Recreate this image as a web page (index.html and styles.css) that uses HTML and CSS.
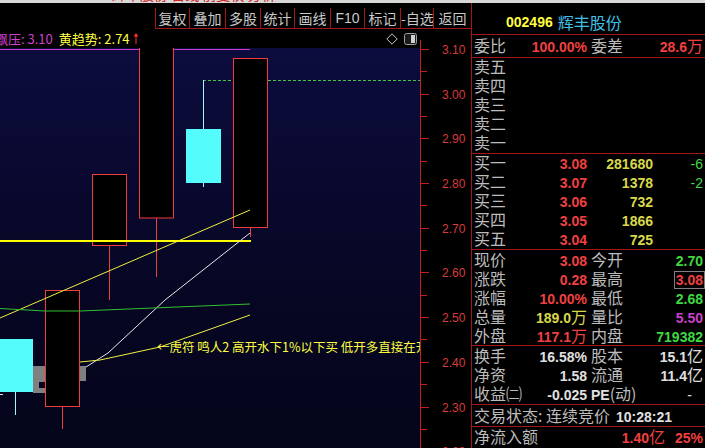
FILE: index.html
```html
<!DOCTYPE html>
<html lang="zh-CN">
<head>
<meta charset="utf-8">
<title>002496 辉丰股份</title>
<link rel="stylesheet" href="styles.css">
</head>
<body>
<div class="screen">
  <div class="strip"><span class="strip-text">辉丰股份 日线 前复权 分析</span></div>
  <div class="main">
    <div class="left">
      <div class="toolbar">
        <div class="btn w34">复权</div>
        <div class="btn w36">叠加</div>
        <div class="btn w35">多股</div>
        <div class="btn w34">统计</div>
        <div class="btn w36">画线</div>
        <div class="btn w34 lat">F10</div>
        <div class="btn w36">标记</div>
        <div class="btn w33">-自选</div>
        <div class="btn w38">返回</div>
      </div>
      <div class="info">
        <div class="info-left">
          <span class="mag first">飘压: 3.10</span>
          <span class="ylw">黄趋势: 2.74</span>
          <svg class="up-arrow" width="6" height="13" viewBox="0 0 6 13"><path d="M3 1 L0.5 4.5 H2.5 V12 H3.5 V4.5 H5.5 Z" fill="#ff3030"/></svg>
          <span class="spacer"></span>
          <svg class="ico" width="12" height="12" viewBox="0 0 12 12"><path d="M6 0.8 L11.2 6 L6 11.2 L0.8 6 Z" fill="none" stroke="#c8c8c8"/></svg>
          <svg class="ico" width="13" height="12" viewBox="0 0 13 12"><rect x="0.5" y="0.5" width="12" height="11" rx="2" fill="#1a1a1a" stroke="#a0a0a0"/><rect x="7" y="2" width="4" height="8" fill="#d0d0d0"/></svg>
        </div>
        <div class="info-axis"></div>
      </div>
      <div class="plot-row">
        <svg class="plot" width="420" height="400" viewBox="0 48 420 400">
          <line x1="0" y1="49.5" x2="250" y2="49.5" stroke="#c83cc8"/>
          <line x1="203" y1="80.5" x2="420" y2="80.5" stroke="#3cc83c" stroke-dasharray="3 2"/>
          <path d="M33 366 H45 V382 H39 V388 H45 V393 H33 Z" fill="#808080"/>
          <rect x="79" y="366" width="7" height="15" fill="#808080"/>
          <g stroke="#f03c3c" fill="#000">
            <line x1="156.5" y1="218" x2="156.5" y2="277"/>
            <rect x="139.5" y="40" width="34" height="178"/>
            <line x1="250.5" y1="228" x2="250.5" y2="237"/>
            <rect x="233.5" y="58.5" width="34" height="169"/>
            <line x1="109.5" y1="245" x2="109.5" y2="300"/>
            <rect x="92.5" y="174.5" width="34" height="71"/>
            <line x1="62.5" y1="406" x2="62.5" y2="429"/>
            <rect x="45.5" y="290.5" width="34" height="116"/>
          </g>
          <line x1="203.5" y1="80" x2="203.5" y2="187" stroke="#a0f8f8"/>
          <rect x="186" y="129" width="35" height="54" fill="#54fcfc"/>
          <line x1="15.5" y1="392" x2="15.5" y2="415" stroke="#a0f8f8"/>
          <rect x="0" y="339" width="33" height="53" fill="#54fcfc"/>
          <line x1="0" y1="394.5" x2="3" y2="394.5" stroke="#e0e0e0"/>
          <line x1="0" y1="241" x2="251" y2="241" stroke="#ffff00" stroke-width="2"/>
          <line x1="0" y1="318" x2="250" y2="210" stroke="#f0f040"/>
          <polyline points="86,367 108,353 165,300 250,233" fill="none" stroke="#e8e8e8"/>
          <polyline points="0,308.5 45,311 80,311 250,304" fill="none" stroke="#30c030"/>
          <polyline points="80,362 100,360 160,347 250,315" fill="none" stroke="#f0f040"/>
          <text class="note" x="157" y="352">←虎符 鸣人2 高开水下1%以下买 低开多直接在开盘</text>
        </svg>
        <div class="axis">
          <svg class="axis-svg" width="50" height="400" viewBox="421 48 50 400">
            <g stroke="#c02020">
              <line x1="421" y1="49.5" x2="429" y2="49.5"/>
              <line x1="421" y1="71.5" x2="427" y2="71.5"/>
              <line x1="421" y1="94.5" x2="429" y2="94.5"/>
              <line x1="421" y1="116.5" x2="427" y2="116.5"/>
              <line x1="421" y1="138.5" x2="429" y2="138.5"/>
              <line x1="421" y1="161.5" x2="427" y2="161.5"/>
              <line x1="421" y1="183.5" x2="429" y2="183.5"/>
              <line x1="421" y1="205.5" x2="427" y2="205.5"/>
              <line x1="421" y1="228.5" x2="429" y2="228.5"/>
              <line x1="421" y1="250.5" x2="427" y2="250.5"/>
              <line x1="421" y1="272.5" x2="429" y2="272.5"/>
              <line x1="421" y1="295.5" x2="427" y2="295.5"/>
              <line x1="421" y1="317.5" x2="429" y2="317.5"/>
              <line x1="421" y1="339.5" x2="427" y2="339.5"/>
              <line x1="421" y1="362.5" x2="429" y2="362.5"/>
              <line x1="421" y1="384.5" x2="427" y2="384.5"/>
              <line x1="421" y1="407.5" x2="429" y2="407.5"/>
              <line x1="421" y1="429.5" x2="427" y2="429.5"/>
            </g>
            <g class="ax-label">
              <text x="442" y="54">3.10</text>
              <text x="442" y="98.5">3.00</text>
              <text x="442" y="143">2.90</text>
              <text x="442" y="188">2.80</text>
              <text x="442" y="232.5">2.70</text>
              <text x="442" y="277">2.60</text>
              <text x="442" y="322">2.50</text>
              <text x="442" y="366.5">2.40</text>
              <text x="442" y="411.5">2.30</text>
              <text x="442" y="456">2.20</text>
            </g>
          </svg>
        </div>
      </div>
    </div>

    <div class="panel">
      <div class="head"><span class="code">002496</span><span class="name">辉丰股份</span></div>

      <div class="sec s-one">
        <div class="row rq"><span class="lb">委比</span><span class="v red">100.00%</span><span class="lb2">委差</span><span class="v red">28.6<i>万</i></span></div>
      </div>

      <div class="sec s-book">
        <div class="row rb"><span class="lb">卖五</span></div>
        <div class="row rb"><span class="lb">卖四</span></div>
        <div class="row rb"><span class="lb">卖三</span></div>
        <div class="row rb"><span class="lb">卖二</span></div>
        <div class="row rb"><span class="lb">卖一</span></div>
      </div>

      <div class="sec s-book">
        <div class="row rb"><span class="lb">买一</span><span class="v red">3.08</span><span class="v ylw">281680</span><span class="n grn">-6</span></div>
        <div class="row rb"><span class="lb">买二</span><span class="v red">3.07</span><span class="v ylw">1378</span><span class="n grn">-2</span></div>
        <div class="row rb"><span class="lb">买三</span><span class="v red">3.06</span><span class="v ylw">732</span><span class="n"></span></div>
        <div class="row rb"><span class="lb">买四</span><span class="v red">3.05</span><span class="v ylw">1866</span><span class="n"></span></div>
        <div class="row rb"><span class="lb">买五</span><span class="v red">3.04</span><span class="v ylw">725</span><span class="n"></span></div>
      </div>

      <div class="sec s-quote">
        <div class="row rq"><span class="lb">现价</span><span class="v red">3.08</span><span class="lb2">今开</span><span class="v grn">2.70</span></div>
        <div class="row rq"><span class="lb">涨跌</span><span class="v red">0.28</span><span class="lb2">最高</span><span class="v red"><span class="boxed">3.08</span></span></div>
        <div class="row rq"><span class="lb">涨幅</span><span class="v red">10.00%</span><span class="lb2">最低</span><span class="v grn">2.68</span></div>
        <div class="row rq"><span class="lb">总量</span><span class="v ylw">189.0<i>万</i></span><span class="lb2">量比</span><span class="v mag">5.50</span></div>
        <div class="row rq"><span class="lb">外盘</span><span class="v red">117.1<i>万</i></span><span class="lb2">内盘</span><span class="v grn">719382</span></div>
      </div>

      <div class="sec s-fin">
        <div class="row rq"><span class="lb">换手</span><span class="v wht">16.58%</span><span class="lb2">股本</span><span class="v wht">15.1<i>亿</i></span></div>
        <div class="row rq"><span class="lb">净资</span><span class="v wht">1.58</span><span class="lb2">流通</span><span class="v wht">11.4<i>亿</i></span></div>
        <div class="row rq"><span class="lb">收益㈡</span><span class="v wht">-0.025</span><span class="lb2"><b class="pe">PE</b>(动)</span><span class="v wht dash">-</span></div>
      </div>

      <div class="sec s-state">
        <div class="row rs"><span class="lb">交易状态: 连续竞价</span><span class="v wht">10:28:21</span></div>
      </div>

      <div class="sec s-flow">
        <div class="row rf"><span class="lb">净流入额</span><span class="v red amt">1.40<i>亿</i></span><span class="v red">25%</span></div>
      </div>
    </div>
  </div>
</div>
</body>
</html>
```

FILE: styles.css
```css
* {
  box-sizing: border-box;
  margin: 0;
  padding: 0;
}

html, body {
  width: 705px;
  height: 448px;
  overflow: hidden;
  background: #000;
}

body {
  font-family: "Noto Sans CJK SC", "Liberation Sans", sans-serif;
  color: #c0c0c0;
}

.screen {
  width: 705px;
  height: 448px;
  display: flex;
  flex-direction: column;
}

.strip {
  height: 3px;
  flex: none;
  background: #d8d8d8;
  overflow: hidden;
}

.strip-text {
  display: block;
  margin-top: -13px;
  margin-left: 112px;
  font-size: 14px;
  line-height: 14px;
  color: #d02020;
  white-space: nowrap;
}

.main {
  display: flex;
  height: 445px;
  flex: none;
}

.left {
  width: 471px;
  display: flex;
  flex-direction: column;
}

/* toolbar */
.toolbar {
  height: 26px;
  flex: none;
  display: flex;
  align-items: flex-end;
  padding-left: 155px;
}

.btn {
  height: 21px;
  border-left: 1px solid #a01818;
  border-bottom: 1px solid #a01818;
  font-size: 14px;
  line-height: 20px;
  text-align: center;
  color: #c8c8c8;
  white-space: nowrap;
}

.btn.lat {
  font-family: "Liberation Sans", sans-serif;
}

.w33 { width: 33px; }
.w34 { width: 34px; }
.w35 { width: 35px; }
.w36 { width: 36px; }
.w38 { width: 38px; }

/* info row */
.info {
  height: 19px;
  flex: none;
  display: flex;
}

.info-left {
  width: 420px;
  display: flex;
  align-items: center;
  font-size: 13px;
  line-height: 19px;
  white-space: nowrap;
  overflow: hidden;
  padding-right: 3px;
}

.info-left .first {
  margin-left: -5px;
}

.info-left .ylw {
  margin-left: 6px;
  color: #ffff40;
}

.info-left .mag {
  color: #d040d0;
}

.up-arrow {
  display: block;
  margin-left: 3px;
}

.spacer {
  flex: 1;
}

.ico {
  display: block;
  margin-left: 6px;
}

.info-axis {
  width: 51px;
  margin-top: 11px;
  border-left: 1px solid #c02020;
}

/* chart */
.plot-row {
  display: flex;
  height: 400px;
  flex: none;
}

.plot {
  display: block;
  width: 420px;
  height: 400px;
  background: linear-gradient(#0c0c3e, #070726 55%, #04041a);
}

.note {
  font-family: "Noto Sans CJK SC", sans-serif;
  font-size: 12.5px;
  fill: #ffff40;
}

.axis {
  width: 51px;
  height: 400px;
  border-left: 1px solid #c02020;
}

.axis-svg {
  display: block;
  overflow: visible;
}

.ax-label text {
  font-family: "Liberation Sans", sans-serif;
  font-size: 12px;
  fill: #d83c3c;
}

/* right panel */
.panel {
  width: 234px;
  border-left: 1px solid #a01818;
  display: flex;
  flex-direction: column;
}

.head {
  height: 32px;
  flex: none;
  padding-top: 6px;
  padding-left: 34px;
  display: flex;
  align-items: center;
  border-bottom: 1px solid #a01818;
}

.code {
  font-family: "Liberation Sans", sans-serif;
  font-weight: bold;
  font-size: 14px;
  color: #ffff40;
}

.name {
  margin-left: 5px;
  font-size: 16px;
  color: #40c0e8;
}

.sec {
  flex: none;
  border-bottom: 1px solid #a01818;
  padding: 0 2px;
}

.s-one {
  height: 23px;
  padding-top: 1px;
}

.s-book {
  height: 96px;
}

.s-book .row:first-child {
  margin-top: -1px;
}

.s-quote {
  height: 96px;
}

.s-fin {
  height: 59px;
}

.s-state {
  height: 22px;
  padding-top: 1px;
}

.s-flow {
  border-bottom: none;
  flex: 1;
}

.row {
  height: 19px;
  line-height: 19px;
  display: grid;
  align-items: baseline;
  white-space: nowrap;
}

.rb {
  grid-template-columns: 48px 65px 66px 50px;
}

.rq {
  grid-template-columns: 48px 65px 60px 56px;
}

.rs {
  display: flex;
}

.rf {
  display: flex;
}

.lb {
  font-size: 16px;
  color: #bcbcbc;
}

.rs .lb {
  flex: none;
}

.rf .lb {
  flex: 1;
}

.lb2 {
  font-size: 16px;
  color: #bcbcbc;
  padding-left: 4px;
}

.pe {
  font-family: "Liberation Sans", sans-serif;
  font-weight: bold;
  font-size: 14px;
  color: #e0e0e0;
}

.v {
  font-family: "Liberation Sans", sans-serif;
  font-weight: bold;
  font-size: 14px;
  text-align: right;
}

.v i {
  font-style: normal;
  font-weight: normal;
  font-family: "Noto Sans CJK SC", sans-serif;
  font-size: 16px;
}

.rs .v {
  margin-left: 6px;
}

.amt {
  margin-right: 10px;
}

.n {
  font-family: "Liberation Sans", sans-serif;
  font-size: 14px;
  text-align: right;
}

.dash {
  padding-right: 11px;
  font-weight: normal;
}

.boxed {
  display: inline-block;
  border: 1px solid #808080;
  line-height: 16px;
  padding: 0 1px;
  margin-right: -2px;
}

.red { color: #f04040; }
.ylw { color: #d8d848; }
.grn { color: #40d840; }
.mag { color: #c840c8; }
.wht { color: #e0e0e0; }
```
